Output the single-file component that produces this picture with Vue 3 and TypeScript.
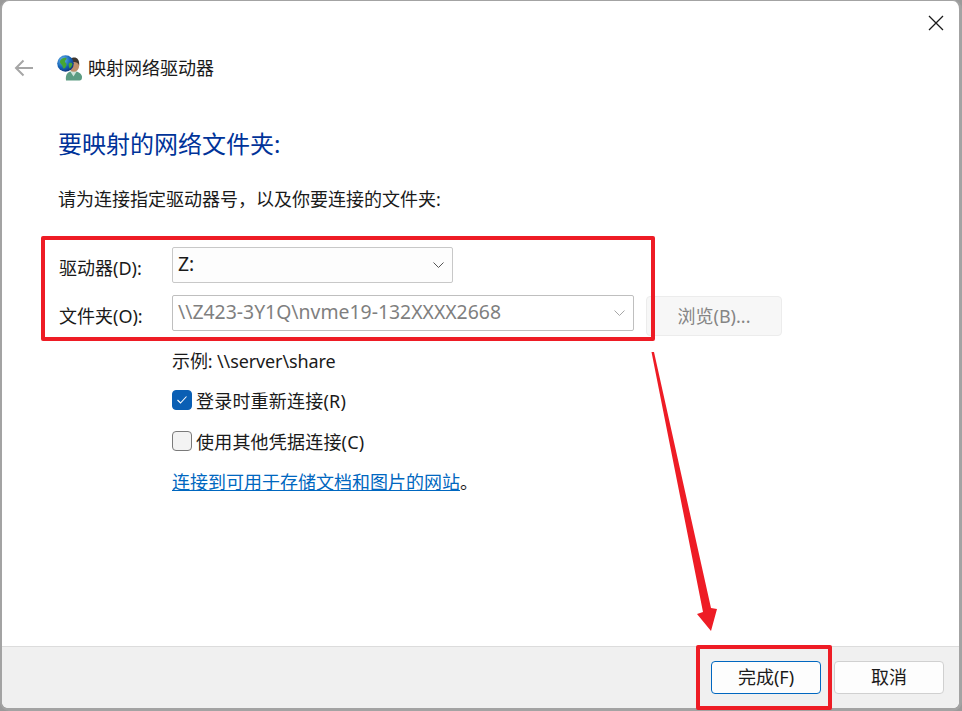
<script setup lang="ts">
const fontRows = [
  { label: "驱动器(D):", value: "Z:", disabled: false },
  { label: "文件夹(O):", value: "\\\\Z423-3Y1Q\\nvme19-132XXXX2668", disabled: true },
];
</script>

<template>
  <div class="window">
    <header class="titlebar">
      <svg class="back" width="20" height="18" viewBox="0 0 20 18" fill="none" stroke="#a6a6a6" stroke-width="2">
        <path d="M19 9H2M9.5 1.5 2 9l7.5 7.5" />
      </svg>
      <svg class="app-icon" width="26" height="26" viewBox="0 0 26 26">
        <defs>
          <radialGradient id="globe" cx="0.35" cy="0.3" r="0.8">
            <stop offset="0" stop-color="#6db8ee" />
            <stop offset="0.55" stop-color="#1565b8" />
            <stop offset="1" stop-color="#0e2a70" />
          </radialGradient>
        </defs>
        <path d="M9 25.500c-1-6 2-9.500 7-9.500s8.500 2.500 9 5.500c.2 3-1 4-2.500 4z" fill="#5c9c82" />
        <path d="M13 16l3.500 5.500 3.500-5.500z" fill="#cfe3d8" />
        <ellipse cx="16.800" cy="10.500" rx="5.400" ry="6.300" fill="#c08f6a" />
        <path d="M11.200 9.500c-.5-5 3-7 6-7s5.500 2.500 5 8c-1-3-3-3.500-5-3.500s-4.500.5-6 2.500z" fill="#3f3730" />
        <circle cx="8.500" cy="8.500" r="8.300" fill="url(#globe)" />
        <path d="M3.500 5c2-2 4-2.500 6-2 0 2-1.500 2-1.500 3.500s2 1.500 1.500 3.500-2 4-3 3.500-.5-3-2-4-2-3-1-4.500zM12 8c1.500-.5 3 0 3.500 1-.5 2-1.500 3.500-3 4.500-.5-2-1.500-3.500-.5-5.500z" fill="#46a635" />
      </svg>
      <span class="app-title">映射网络驱动器</span>
    </header>

    <main class="body">
      <h1 class="heading">要映射的网络文件夹:</h1>
      <p class="intro">请为连接指定驱动器号，以及你要连接的文件夹:</p>

      <div class="form">
        <div v-for="row in fontRows" :key="row.label" class="row">
          <label class="label">{{ row.label }}</label>
          <div class="select" :class="{ disabled: row.disabled }">
            <span>{{ row.value }}</span>
            <svg width="11" height="6" viewBox="0 0 11 6" fill="none" stroke-width="1">
              <path d="M.5.5l5 5 5-5" />
            </svg>
          </div>
          <button v-if="row.disabled" class="browse" type="button">浏览(B)...</button>
        </div>
      </div>

      <div class="options">
        <p class="example">示例: \\server\share</p>
        <div class="check-row first">
          <span class="box checked">
            <svg width="12" height="10" viewBox="0 0 12 10" fill="none" stroke="#fff" stroke-width="1.100">
              <path d="M1.500 5l3 3 6-6.500" />
            </svg>
          </span>
          <span>登录时重新连接(R)</span>
        </div>
        <div class="check-row second">
          <span class="box"></span>
          <span>使用其他凭据连接(C)</span>
        </div>
        <p class="link-row"><a class="link">连接到可用于存储文档和图片的网站</a>。</p>
      </div>
    </main>

    <footer class="footer">
      <button class="btn primary" type="button">完成(F)</button>
      <button class="btn" type="button">取消</button>
    </footer>

    <svg class="close" width="16" height="16" viewBox="0 0 16 16" stroke="#1a1a1a" stroke-width="1.300">
      <path d="M1 1l14 14M15 1 1 15" />
    </svg>

    <div class="mark mark-form"></div>
    <div class="mark mark-finish"></div>
    <svg class="arrow" width="80" height="290" viewBox="0 0 80 290">
      <path d="M11.500 2 14 2 71 258 77 259 71 281 57 264 63 262z" fill="#ee1c25" />
    </svg>
  </div>
</template>

<style>
html,
body {
  margin: 0;
  background: #9a9a9a;
}
</style>

<style scoped>
.window {
  position: relative;
  box-sizing: border-box;
  width: 962px;
  height: 711px;
  display: flex;
  flex-direction: column;
  background: #fff;
  border: solid #a3a3a3;
  border-width: 1px 3px 3px 2px;
  border-radius: 9px;
  font-family: "Noto Sans", "Noto Sans CJK SC", sans-serif;
  font-size: 18px;
  color: #1a1a1a;
}

.titlebar {
  display: flex;
  align-items: center;
  height: 30px;
  margin-top: 52px;
  padding-left: 12px;
}

.back {
  margin-right: 23px;
}

.app-icon {
  margin-right: 5px;
}

.app-title {
  line-height: 26px;
}

.body {
  flex: 1;
  padding: 0 0 0 57px;
}

.heading {
  margin: 44px 0 0 -1px;
  font-size: 24px;
  font-weight: 400;
  line-height: 34px;
  color: #003399;
}

.intro {
  margin: 25px 0 0 -1px;
  line-height: 26px;
}

.form {
  margin-top: 35px;
  display: flex;
  flex-direction: column;
  gap: 12px;
}

.row {
  display: flex;
  align-items: flex-start;
  height: 36px;
}

.label {
  width: 113px;
  line-height: 42px;
}

.select {
  box-sizing: border-box;
  width: 281px;
  height: 36px;
  display: flex;
  align-items: center;
  justify-content: space-between;
  padding: 0 8px 0 5px;
  background: #fdfdfd;
  border: 1px solid #c8c8c8;
  border-radius: 2px;
  stroke: #555;
}

.select span {
  font-size: 19.4px;
  line-height: 30px;
  margin-bottom: 3px;
}

.select.disabled {
  width: 462px;
  border-color: #bfbfbf;
  background: #fff;
  color: #7f7f7f;
  stroke: #a6a6a6;
}

.browse {
  box-sizing: border-box;
  width: 136px;
  height: 40px;
  margin: 1px 0 0 12px;
  padding: 0 0 2px;
  background: #f7f7f7;
  border: 1px solid #ececec;
  border-radius: 4px;
  font: inherit;
  color: #858585;
}

.options {
  margin: 17px 0 0 113px;
}

.example {
  margin: 0;
  line-height: 26px;
  letter-spacing: -0.12px;
}

.check-row {
  display: flex;
  align-items: center;
  gap: 4px;
  height: 26px;
}

.check-row span:last-child {
  letter-spacing: 0.2px;
}

.check-row.first {
  margin-top: 13px;
}

.check-row.second {
  margin-top: 15px;
}

.box {
  box-sizing: border-box;
  width: 20px;
  height: 20px;
  display: flex;
  align-items: center;
  justify-content: center;
  background: #f3f3f3;
  border: 1px solid #7a7a7a;
  border-radius: 4px;
}

.box.checked {
  background: #0a5fb4;
  border-color: #0a5fb4;
}

.link-row {
  margin: 15px 0 0;
  line-height: 26px;
}

.link {
  color: #0067c0;
  text-decoration: underline;
}

.footer {
  box-sizing: border-box;
  height: 62px;
  display: flex;
  justify-content: flex-end;
  gap: 13px;
  padding: 14px 15px 0 0;
  background: #f0f0f0;
  border-top: 1px solid #dcdcdc;
  border-radius: 0 0 6px 6px;
}

.btn {
  box-sizing: border-box;
  width: 110px;
  height: 33px;
  padding: 0 0 3px;
  background: #fdfdfd;
  border: 1px solid #d0d0d0;
  border-radius: 4px;
  font: inherit;
  color: #1a1a1a;
}

.btn.primary {
  border-color: #0067c0;
}

.close {
  position: absolute;
  top: 14px;
  right: 15px;
}

.mark {
  position: absolute;
  box-sizing: border-box;
  border: 4px solid #ee1c25;
  border-radius: 2px;
}

.mark-form {
  left: 39px;
  top: 235px;
  width: 614px;
  height: 105px;
}

.mark-finish {
  left: 694px;
  top: 644px;
  width: 136px;
  height: 65px;
}

.arrow {
  position: absolute;
  left: 638px;
  top: 349px;
}
</style>
